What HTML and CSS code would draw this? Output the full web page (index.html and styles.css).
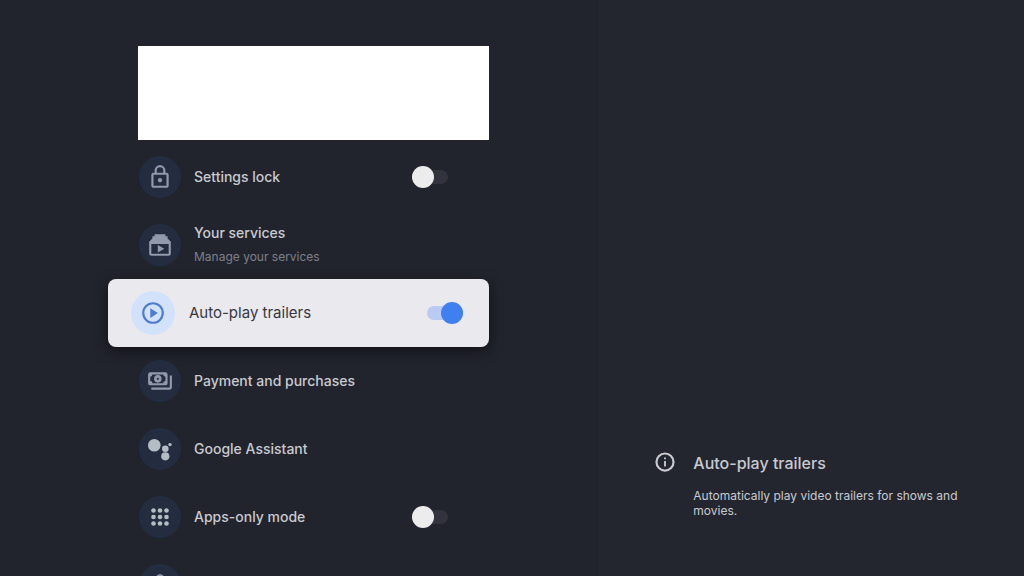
FILE: index.html
```html
<!DOCTYPE html>
<html lang="en">
<head>
    <meta charset="UTF-8">
    <meta name="viewport" content="width=device-width, initial-scale=1.0">
    <title>Auto-play trailers</title>
    <link rel="stylesheet" href="styles.css">
</head>

<body>
<main class="screen">
    <section class="settings">
        <div class="banner"></div>

        <div class="list">
            <label class="row">
                <span class="icon">
                    <svg viewBox="0 0 24 24"><path d="M18 8h-1V6A5 5 0 0 0 7 6v2H6a2 2 0 0 0-2 2v10c0 1.100.9 2 2 2h12a2 2 0 0 0 2-2V10a2 2 0 0 0-2-2zM9 6a3 3 0 0 1 6 0v2H9V6zm9 14H6V10h12v10zm-6-3a2 2 0 1 0 0-4 2 2 0 0 0 0 4z"/></svg>
                </span>
                <span class="text"><span class="name">Settings lock</span></span>
                <input type="checkbox" class="switch">
            </label>

            <a href="#" class="row">
                <span class="icon">
                    <svg viewBox="0 0 24 24"><path d="M7 2h10v2h2v2l3 3v11a2 2 0 0 1-2 2H4a2 2 0 0 1-2-2V9l3-3V4h2zM4 11v9h16v-9zM10 12l6 3.500-6 3.500z"/></svg>
                </span>
                <span class="text">
                    <span class="name">Your services</span>
                    <span class="note">Manage your services</span>
                </span>
            </a>

            <label class="row selected">
                <span class="icon">
                    <svg viewBox="0 0 24 24"><path d="M12 2a10 10 0 1 0 0 20 10 10 0 0 0 0-20zm0 18a8 8 0 1 1 0-16 8 8 0 0 1 0 16zM9.500 7.500v9l7-4.500z"/></svg>
                </span>
                <span class="text"><span class="name">Auto-play trailers</span></span>
                <input type="checkbox" class="switch" checked>
            </label>

            <a href="#" class="row">
                <span class="icon">
                    <svg viewBox="0 0 24 24" fill-rule="evenodd"><path d="M3 4h14a2 2 0 0 1 2 2v8a2 2 0 0 1-2 2H3a2 2 0 0 1-2-2V6a2 2 0 0 1 2-2zM5 6a2 2 0 0 1-2 2v4a2 2 0 0 1 2 2h10a2 2 0 0 1 2-2V8a2 2 0 0 1-2-2z"/><path d="M10 6.500a3.500 3.500 0 1 0 0 7 3.500 3.500 0 0 0 0-7zm0 2.500a1 1 0 1 1 0 2 1 1 0 0 1 0-2z"/><path d="M23 7v11a2 2 0 0 1-2 2H4v-2h17V7h2z"/></svg>
                </span>
                <span class="text"><span class="name">Payment and purchases</span></span>
            </a>

            <a href="#" class="row">
                <span class="icon bright">
                    <svg viewBox="0 0 24 24"><circle cx="6.300" cy="8.300" r="6.300"/><circle cx="17.300" cy="11.700" r="3.300"/><circle cx="17.300" cy="19.300" r="4.100"/><circle cx="22" cy="7.600" r="1.700"/></svg>
                </span>
                <span class="text"><span class="name">Google Assistant</span></span>
            </a>

            <label class="row">
                <span class="icon bright">
                    <svg viewBox="0 0 24 24"><circle cx="5.500" cy="5.500" r="2.300"/><circle cx="12" cy="5.500" r="2.300"/><circle cx="18.500" cy="5.500" r="2.300"/><circle cx="5.500" cy="12" r="2.300"/><circle cx="12" cy="12" r="2.300"/><circle cx="18.500" cy="12" r="2.300"/><circle cx="5.500" cy="18.500" r="2.300"/><circle cx="12" cy="18.500" r="2.300"/><circle cx="18.500" cy="18.500" r="2.300"/></svg>
                </span>
                <span class="text"><span class="name">Apps-only mode</span></span>
                <input type="checkbox" class="switch">
            </label>

            <div class="row">
                <span class="icon">
                    <svg viewBox="0 0 24 24"><circle cx="12" cy="6" r="4"/><path d="M4 12h16v10H4z"/></svg>
                </span>
            </div>
        </div>
    </section>

    <aside class="details">
        <svg class="info" viewBox="0 0 24 24"><path d="M12 1.500a10.500 10.500 0 1 0 0 21 10.500 10.500 0 0 0 0-21zm0 18.600a8.100 8.100 0 1 1 0-16.200 8.100 8.100 0 0 1 0 16.200zM11 11h2v6h-2zM11 7h2v2h-2z"/></svg>
        <div>
            <h2>Auto-play trailers</h2>
            <p>Automatically play video trailers for shows and movies.</p>
        </div>
    </aside>
</main>
</body>
</html>
```
FILE: styles.css
```css
* {
    box-sizing: border-box;
}

body {
    margin: 0;
    font-family: Inter, Roboto, sans-serif;
    background-color: #22242d;
    color: #c8cad0;
}

.screen {
    display: grid;
    grid-template-columns: 7fr 5fr;
    grid-template-rows: 100%;
    height: 100vh;
    overflow: hidden;
}

.settings {
    padding: 46px 108px 0;
}

.banner {
    height: 94px;
    margin: 0 0 3px 30px;
    background: white;
}

.row {
    display: flex;
    align-items: center;
    gap: 13px;
    height: 68px;
    padding: 0 41px 0 31px;
    color: inherit;
    text-decoration: none;
}

.icon {
    display: flex;
    align-items: center;
    justify-content: center;
    width: 42px;
    height: 42px;
    border-radius: 50%;
    background: #242d40;
    color: #9299ad;
}

.icon svg {
    width: 26px;
    height: 26px;
    fill: currentColor;
}

.icon.bright {
    color: #b4bcc4;
}

.icon.bright svg {
    width: 24px;
    height: 24px;
}

.text {
    flex: 1;
    padding-bottom: 1px;
}

.name,
.note {
    display: block;
    font-size: 14px;
    font-weight: 500;
    line-height: 24px;
}

.note {
    font-size: 12px;
    font-weight: 400;
    color: #7d808a;
}

.switch {
    appearance: none;
    position: relative;
    width: 36px;
    height: 22px;
    margin: 0;
}

.switch::before {
    content: "";
    position: absolute;
    inset: 4px 0;
    border-radius: 7px;
    background: #31343d;
}

.switch::after {
    content: "";
    position: absolute;
    top: 0;
    left: 0;
    width: 22px;
    height: 22px;
    border-radius: 50%;
    background: #ececec;
}

.selected {
    gap: 14px;
    padding: 0 26px 0 23px;
    border-radius: 8px;
    background: #e9e9ee;
    color: #36383e;
    box-shadow: 0 4px 14px rgba(0, 0, 0, 0.5);
}

.selected .icon {
    width: 44px;
    height: 44px;
    background: #d3e2fb;
    color: #4d7cd0;
}

.selected .name {
    font-size: 15px;
    font-weight: 400;
}

.switch:checked::before {
    background: #b9cbf2;
}

.switch:checked::after {
    left: auto;
    right: 0;
    background: #3f7ff0;
}

.details {
    display: flex;
    align-items: flex-end;
    gap: 17px;
    padding: 0 60px 58px 56px;
    border-left: 1px solid #1f2129;
    background: #24262f;
}

.info {
    flex: none;
    width: 22px;
    height: 22px;
    margin-bottom: 45px;
    fill: #c8cad0;
}

h2 {
    margin: 0 0 14px;
    font-size: 16px;
    font-weight: 500;
    line-height: 22px;
}

p {
    margin: 0;
    font-size: 12px;
    line-height: 15px;
}
```
